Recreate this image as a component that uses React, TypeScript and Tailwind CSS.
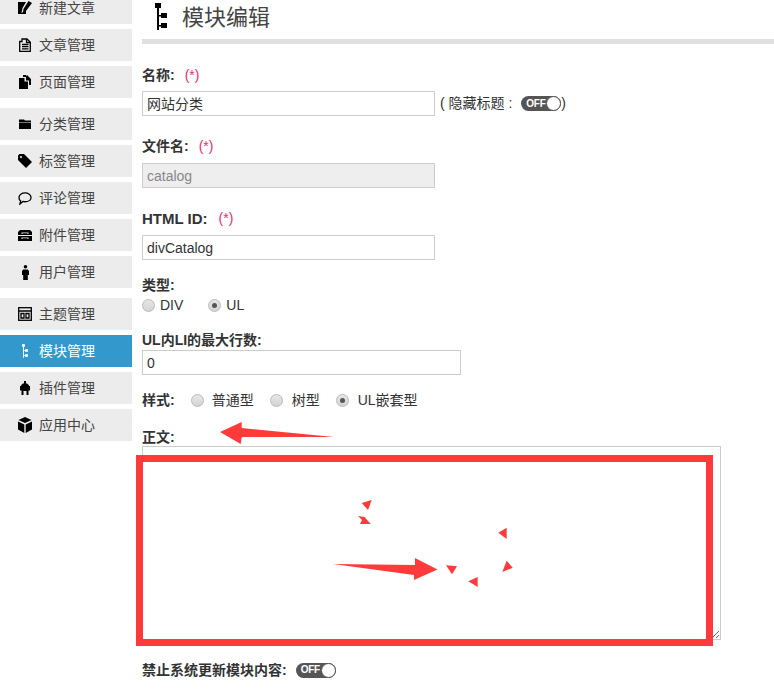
import type { ReactNode } from 'react';

const font = "[font-family:'Liberation_Sans','Noto_Sans_CJK_SC',sans-serif]";

function TreeIcon({ className, fill }: { className: string; fill: string }) {
  return (
    <svg viewBox="0 0 12 27" className={className} fill={fill}>
      <rect x="0" y="0" width="6" height="5" />
      <rect x="2" y="0" width="2" height="27" />
      <rect x="2" y="12" width="5" height="1.5" />
      <rect x="2" y="22" width="5" height="1.5" />
      <rect x="6" y="10" width="6" height="5" />
      <rect x="6" y="20" width="6" height="5" />
    </svg>
  );
}

const icons: Record<string, ReactNode> = {
  edit: (
    <svg viewBox="0 0 14 14" className="w-[14px] h-[14px]" fill="#000">
      <path d="M0 1h8L4.500 7 3.500 12l4-2.500L8 9v4H0z" />
      <path d="M10.500 0 14 2 8 10l-3 1.500L5.500 8z" />
    </svg>
  ),
  article: (
    <svg viewBox="0 0 12 14" className="w-[12px] h-[14px]" fill="none" stroke="#000" strokeWidth="1.3">
      <path d="M.7 3.500H3V1h5l3.300 3.200v9.100H.7z" />
      <path d="M3 6.500h6.500M3 8.700h6.500M3 10.900h6.500" />
      <path d="M7.500 1v3.500h3.800" />
    </svg>
  ),
  page: (
    <svg viewBox="0 0 12 14" className="w-[12px] h-[14px]" fill="#000">
      <path d="M0 3h5.500v3.500H9V14H0z" />
      <path d="M4 0h3v2H4zM8 0l4 4v6h-2V5.500H7V1.500z" />
    </svg>
  ),
  folder: (
    <svg viewBox="0 0 12 10" className="w-[12px] h-[10px]" fill="#000">
      <path d="M0 2V.5h5l1 1h6V3H0zM0 3.500h12V10H0z" />
    </svg>
  ),
  tag: (
    <svg viewBox="0 0 14 14" className="w-[14px] h-[14px]" fill="#000">
      <path d="M0 1.500 1.500 0H6l8 8-6 6-8-8zM3 2a1 1 0 1 0 .01 0z" fillRule="evenodd" />
    </svg>
  ),
  comment: (
    <svg viewBox="0 0 15 14" className="w-[14px] h-[13px]" fill="none" stroke="#000" strokeWidth="1.4">
      <path d="M7.500 1c3.500 0 6.500 2 6.500 4.800s-3 4.700-6.500 4.700c-.8 0-1.500-.1-2.200-.3L2 13l.8-3.200C1.700 8.900 1 7.500 1 5.800 1 3 4 1 7.500 1z" />
    </svg>
  ),
  attach: (
    <svg viewBox="0 0 14 11" className="w-[14px] h-[11px]" fill="#000">
      <path d="M2 0h10l2 2v3H0V2zM3.500 2.500V4h1V3.200h5V4h1V2.500z" fillRule="evenodd" />
      <path d="M0 6h14v5H0zM3.500 7.500V9h1v-.8h5V9h1V7.500z" fillRule="evenodd" />
    </svg>
  ),
  user: (
    <svg viewBox="0 0 7 15" className="w-[7px] h-[15px]" fill="#000">
      <circle cx="3.500" cy="1.800" r="1.800" />
      <path d="M1.200 4.500h4.600L7 6v4H5.800v5H1.200v-5H0V6z" />
    </svg>
  ),
  theme: (
    <svg viewBox="0 0 14 14" className="w-[14px] h-[14px]" fill="none" stroke="#000" strokeWidth="1.3">
      <rect x=".7" y=".7" width="12.600" height="12.600" />
      <path d="M1 4h12M3 6.500h3v4.500H3zM8 6.500h3v4.500H8z" />
    </svg>
  ),
  plugin: (
    <svg viewBox="0 0 10 14" className="w-[10px] h-[14px]" fill="#000">
      <path d="M4 0h2v2.200C8 2.800 9 3.800 9 5h1v4.500H8.500V10h-7v-.5H0V5h1c0-1.200 1-2.200 3-2.800z" />
      <rect x="1.500" y="10" width="2" height="4" />
      <rect x="6.500" y="10" width="2" height="4" />
    </svg>
  ),
  app: (
    <svg viewBox="0 0 14 16" className="w-[14px] h-[16px]" fill="#000">
      <path d="M7 0l6.500 3L7 6 .5 3zM0 4.500l6.300 2.900V16L0 12.500zM14 4.500 7.700 7.400V16l6.300-3.500z" />
    </svg>
  ),
};

type NavItem = { label: string; icon: string; active?: boolean; gap?: boolean };

const navItems: NavItem[] = [
  { label: '新建文章', icon: 'edit' },
  { label: '文章管理', icon: 'article' },
  { label: '页面管理', icon: 'page' },
  { label: '分类管理', icon: 'folder', gap: true },
  { label: '标签管理', icon: 'tag' },
  { label: '评论管理', icon: 'comment' },
  { label: '附件管理', icon: 'attach' },
  { label: '用户管理', icon: 'user' },
  { label: '主题管理', icon: 'theme', gap: true },
  { label: '模块管理', icon: 'tree', active: true },
  { label: '插件管理', icon: 'plugin' },
  { label: '应用中心', icon: 'app' },
];

function Toggle() {
  return (
    <span className="inline-flex items-center w-[40px] h-[15px] rounded-full bg-[#555] relative">
      <span className="text-[10px] leading-none font-bold text-white ml-[5px] tracking-[-0.3px]">OFF</span>
      <span className="absolute right-0 top-0 w-[15px] h-[15px] rounded-full bg-white border border-[#555]" />
    </span>
  );
}

function Radio({ checked }: { checked?: boolean }) {
  return (
    <span className="w-[13px] h-[13px] rounded-full border border-[#bbb] bg-gradient-to-b from-[#e6e6e6] to-[#d4d4d4] flex items-center justify-center shrink-0">
      {checked && <span className="w-[5px] h-[5px] rounded-full bg-[#555]" />}
    </span>
  );
}

function Required({ className }: { className: string }) {
  return <span className={`text-[#ee2a72] font-normal ${className}`}>(*)</span>;
}

function Marks() {
  const arrows = [
    'M334 437 L241.700 428 L241.700 422 L220 432 L240.700 444 L241.700 437 Z',
    'M333 564 L415 565 L415 558 L437.500 569.500 L414 580 L414 575 Z',
    'M371.700 500 L361.700 503 L368 510 Z',
    'M358 516 L364.500 517 L370.700 524 L360 524 L362 520 Z',
    'M506.700 527.700 L498.300 532.700 L506.700 539 Z',
    'M446 565.300 L457 566.300 L452 574.300 Z',
    'M506.700 560.700 L512.700 567.700 L502.300 572 Z',
    'M477.700 577 L468.300 581.300 L477.700 587 Z',
  ];
  return (
    <svg className="absolute left-0 top-0 pointer-events-none" width="774" height="690" fill="#ff3a3a">
      {arrows.map((d) => (
        <path key={d} d={d} />
      ))}
    </svg>
  );
}

export default function App() {
  return (
    <div className={`${font} relative w-[774px] h-[690px] overflow-hidden bg-white flex text-[14px] text-[#333]`}>
      <aside className="w-[132px] -mt-[8px] shrink-0 flex flex-col">
        {navItems.map((item, i) => (
          <div
            key={item.label}
            className={`h-[32px] shrink-0 flex items-center ${i === 0 ? '' : item.gap ? 'mt-[10px]' : 'mt-[5px]'} ${
              item.active ? 'bg-[#3399cc] text-white' : 'bg-[#ececec] text-[#444]'
            }`}
          >
            <span className="w-[39px] pl-[17px] flex justify-start items-center h-full">
              <span className="w-[16px] flex justify-center">
                {item.icon === 'tree' ? <TreeIcon className="w-[6px] h-[14px]" fill="#fff" /> : icons[item.icon]}
              </span>
            </span>
            <span>{item.label}</span>
          </div>
        ))}
      </aside>

      <main className="ml-[10px] flex-1 min-w-0">
        <div className="h-[44px] border-b-[5px] border-[#e0e0e0] flex items-start">
          <TreeIcon className="w-[12px] h-[27px] ml-[13px] mt-[3px]" fill="#000" />
          <h1 className="ml-[15px] mt-[3px] text-[22px] leading-[30px] font-normal text-[#444]">模块编辑</h1>
        </div>

        <div className="mt-[23px] h-[16px] flex items-center font-bold leading-none">
          名称:<Required className="ml-[10px]" />
        </div>
        <div className="mt-[8px] flex items-center">
          <input readOnly value="网站分类" className="w-[293px] h-[25px] border border-[#ccc] px-[4px] pb-[1px] text-[14px] text-[#333] outline-none" />
          <span className="ml-[5px]">( 隐藏标题 :</span>
          <span className="ml-[9px] flex"><Toggle /></span>
          <span>)</span>
        </div>

        <div className="mt-[22px] h-[16px] flex items-center font-bold leading-none">
          文件名:<Required className="ml-[10px]" />
        </div>
        <div className="mt-[9px]">
          <input readOnly value="catalog" className="block w-[293px] h-[25px] border border-[#ccc] bg-[#eee] px-[4px] text-[14px] text-[#888] outline-none" />
        </div>

        <div className="mt-[22px] h-[16px] flex items-center font-bold leading-none text-[15px]">
          HTML ID:<Required className="ml-[11px] text-[14px]" />
        </div>
        <div className="mt-[9px]">
          <input readOnly value="divCatalog" className="block w-[293px] h-[25px] border border-[#ccc] px-[4px] text-[14px] text-[#333] outline-none" />
        </div>

        <div className="mt-[17px] h-[16px] flex items-center font-bold leading-none">类型:</div>
        <div className="mt-[4px] h-[16px] flex items-center">
          <Radio />
          <span className="ml-[5px]">DIV</span>
          <span className="ml-[25px]"><Radio checked /></span>
          <span className="ml-[5px]">UL</span>
        </div>

        <div className="mt-[19px] h-[16px] flex items-center font-bold leading-none">UL内LI的最大行数:</div>
        <div className="mt-[2px]">
          <input readOnly value="0" className="block w-[319px] h-[25px] border border-[#ccc] px-[4px] text-[14px] text-[#333] outline-none" />
        </div>

        <div className="mt-[17px] h-[16px] flex items-center leading-none">
          <span className="font-bold">样式:</span>
          <span className="ml-[16px]"><Radio /></span>
          <span className="ml-[8px]">普通型</span>
          <span className="ml-[16px]"><Radio /></span>
          <span className="ml-[9px]">树型</span>
          <span className="ml-[16px]"><Radio checked /></span>
          <span className="ml-[9px]">UL嵌套型</span>
        </div>

        <div className="mt-[21px] h-[16px] flex items-center font-bold leading-none">正文:</div>
        <div className="mt-[1px]">
          <textarea readOnly className="block w-[579px] h-[194px] border border-[#ccc] outline-none" />
        </div>

        <div className="mt-[22px] h-[16px] flex items-center font-bold leading-none">
          禁止系统更新模块内容:
          <span className="ml-[9px] flex"><Toggle /></span>
        </div>
      </main>

      <div className="absolute left-[136px] top-[455px] w-[577px] h-[191px] border-[7px] border-[#ff3a3a]" />
      <Marks />
    </div>
  );
}
